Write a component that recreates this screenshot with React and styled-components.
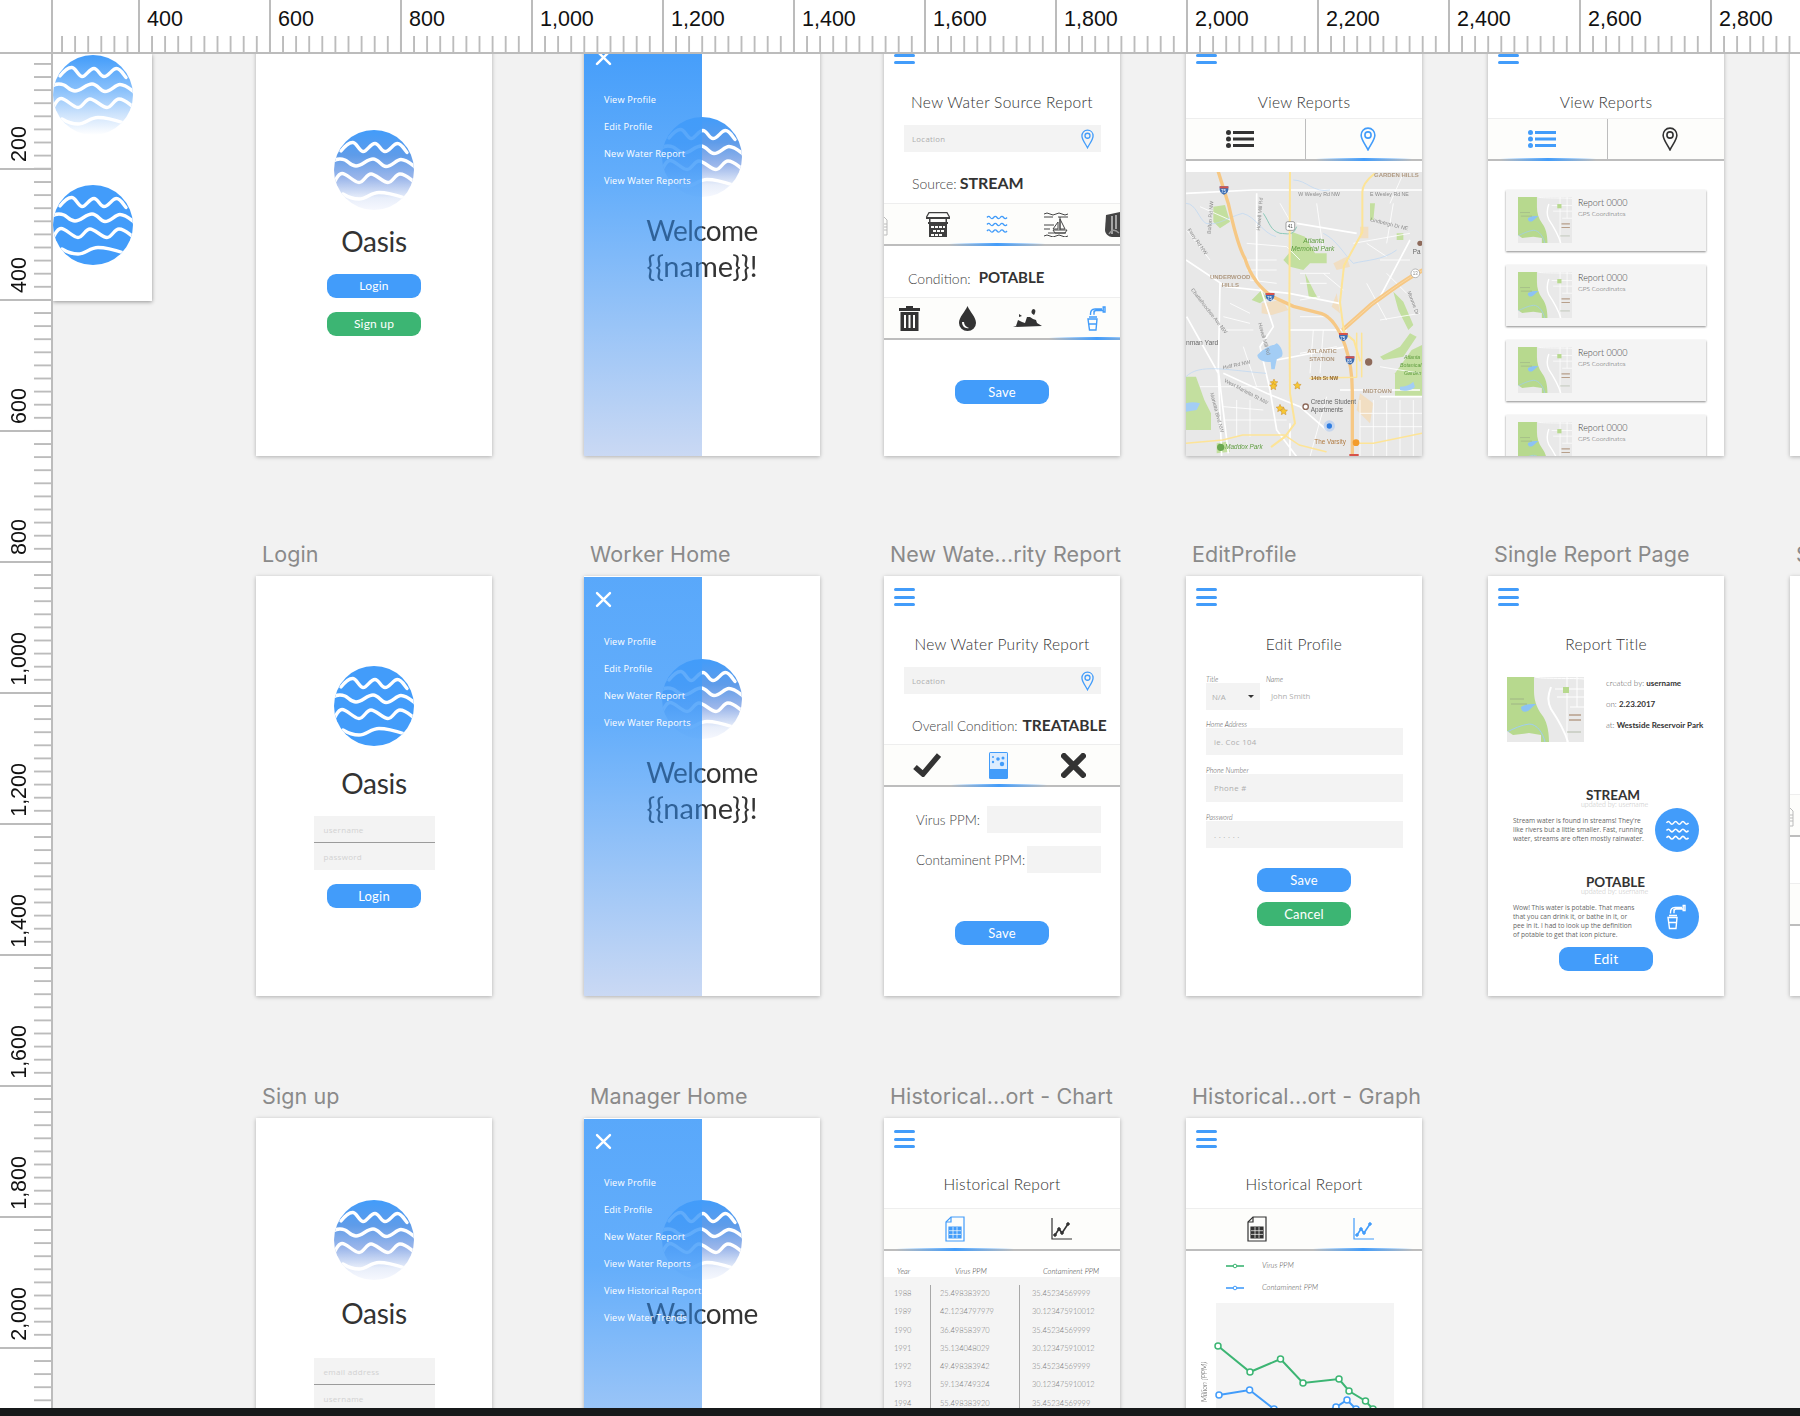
import React from "react";
import styled, { createGlobalStyle } from "styled-components";

const BLUE = "#429cfa";
const GREEN = "#3cb573";
const INK = "#3a3a3a";

const Global = createGlobalStyle`
  html, body { margin: 0; padding: 0; background: #f2f2f2; }
  * { box-sizing: border-box; }
`;

const Page = styled.div`
  width: 1800px;
  height: 1416px;
  display: flex;
  flex-direction: column;
  overflow: hidden;
  background: #f2f2f2;
  font-family: "Lato", "Liberation Sans", sans-serif;
  color: ${INK};
`;

/* ---------- rulers ---------- */

const TopRuler = styled.div`
  flex: none;
  height: 54px;
  display: flex;
  background: #fff;
  border-bottom: 2px solid #bcbcbc;
  position: relative;
  z-index: 3;
`;

const Corner = styled.div`
  flex: none;
  width: 53px;
  border-right: 2px solid #bcbcbc;
`;

const ticksX = `linear-gradient(to right, #bcbcbc 0, #bcbcbc 2px, transparent 2px)`;

const TopCell = styled.div`
  flex: none;
  width: ${p => p.$w}px;
  padding: 6px 0 0 7px;
  font: 21.5px/26px "Liberation Sans", sans-serif;
  color: #111;
  border-left: ${p => (p.$partial ? "none" : "2px solid #bcbcbc")};
  background-image: ${ticksX};
  background-size: 13.1px 16px;
  background-repeat: repeat-x;
  background-position: ${p => (p.$partial ? "8.1px" : "-2px")} bottom;
`;

const Middle = styled.div`
  flex: 1;
  min-height: 0;
  display: flex;
  overflow: hidden;
`;

const LeftRuler = styled.div`
  flex: none;
  width: 53px;
  background: #fff;
  border-right: 2px solid #bcbcbc;
  position: relative;
  z-index: 3;
`;

const ticksY = `linear-gradient(to bottom, #bcbcbc 0, #bcbcbc 2px, transparent 2px)`;

const LeftCell = styled.div`
  height: ${p => p.$h}px;
  display: flex;
  align-items: flex-end;
  padding: 0 0 6px 8px;
  border-bottom: ${p => (p.$last ? "none" : "2px solid #bcbcbc")};
  background-image: ${ticksY};
  background-size: 17px 13.1px;
  background-repeat: repeat-y;
  background-position: right ${p => p.$off}px;
`;

const LeftLabel = styled.span`
  writing-mode: vertical-rl;
  transform: rotate(180deg);
  font: 21.5px/22px "Liberation Sans", sans-serif;
  color: #111;
`;

const Strip = styled.div`
  flex: none;
  height: 8px;
  background: #17191a;
  position: relative;
  z-index: 4;
`;

/* ---------- canvas ---------- */

const Canvas = styled.div`
  flex: 1;
  min-width: 0;
  display: grid;
  grid-template-columns: 203px 328px 300px 302px 302px 302px 236px;
  grid-template-rows: 422px 540px 542px;
  align-items: end;
  margin-top: -20px;
`;

const Blank = styled.span``;

const Cell = styled.div`
  display: flex;
  flex-direction: column;
  width: 236px;
`;

const Label = styled.div`
  margin: 0 0 9px 6px;
  font: 400 21.5px/26px "Inter", "Liberation Sans", sans-serif;
  letter-spacing: 0.1px;
  color: #8a8a8a;
  white-space: nowrap;
`;

const Board = styled.div`
  position: relative;
  width: 236px;
  height: ${p => p.$h || 420}px;
  flex: none;
  display: flex;
  flex-direction: column;
  background: #fff;
  box-shadow: 0 1px 4px rgba(0, 0, 0, 0.28);
  overflow: hidden;
`;

const Assets = styled.div`
  align-self: start;
  width: 99px;
  height: 247px;
  margin-top: 20px;
  padding-top: 1px;
  display: flex;
  flex-direction: column;
  gap: 50px;
  background: #fff;
  box-shadow: 0 1px 4px rgba(0, 0, 0, 0.4);
`;

/* ---------- shared parts ---------- */

const BurgerWrap = styled.div`
  flex: none;
  width: 21px;
  height: 18px;
  margin: 12px 0 0 10px;
  display: flex;
  flex-direction: column;
  justify-content: space-between;
`;

const BurgerBar = styled.span`
  height: 3px;
  border-radius: 2px;
  background: ${BLUE};
`;

const Burger = () => (
  <BurgerWrap>
    <BurgerBar />
    <BurgerBar />
    <BurgerBar />
  </BurgerWrap>
);

const Title = styled.div`
  flex: none;
  margin-top: ${p => p.$mt ?? 28}px;
  height: 20px;
  font: 300 15.5px/20px "Lato", sans-serif;
  text-align: center;
  color: #333;
  letter-spacing: 0.3px;
`;

const LogoSvg = styled.svg`
  display: block;
  flex: none;
  margin: ${p => (p.$mt !== undefined ? `${p.$mt}px auto 0` : "0")};
`;

const stops = {
  fade: [[0, "#429cfa"], [0.32, "#5f9ce9"], [0.6, "#9bb6ea"], [0.85, "#e8eefa"], [1, "#f6f8fe"]],
  pale: [[0, "#429cfa"], [0.45, "#8cc2fb"], [0.75, "#cfe4fc"], [1, "#ffffff"]],
};

const Logo = ({ variant = "solid", mt }) => {
  const id = `logo-${variant}`;
  return (
    <LogoSvg width="80" height="80" viewBox="0 0 80 80" $mt={mt}>
      <defs>
        <clipPath id="logo-clip">
          <circle cx="40" cy="40" r="40" />
        </clipPath>
        {stops[variant] && (
          <linearGradient id={id} x1="0" y1="0" x2="0" y2="1">
            {stops[variant].map(([o, c]) => (
              <stop key={o} offset={o} stopColor={c} />
            ))}
          </linearGradient>
        )}
      </defs>
      <circle cx="40" cy="40" r="40" fill={stops[variant] ? `url(#${id})` : BLUE} />
      <g clipPath="url(#logo-clip)" fill="none" stroke="#fff" strokeWidth="3.4" strokeLinecap="round">
        <path d="M7 21C11 16 15 12 19 12.5C23 13 25 21 29 21.5C33 22 36 13.5 41 13.5C45 13.5 47 21.5 51 21.5C56 21.5 59 13.5 63.5 13.5C67.5 13.5 70 19 73 22.5" />
        <path d="M-1 31C4 28 7 28.5 11 30C15 32 17 36 22 36C28 36 33 29 39 29C45 29 47 36.5 52 36.5C58 36.5 62 29.5 67 29.5C72 29.5 76 33 81 37" />
        <path d="M1 51C3 47 5 43.5 8 43.5C13 43.5 20 52.5 25 52.5C30 52.5 32 44 37 44C42 44 49 52.5 54 52.5C59 52.5 61 44 66 44C71 44 75 48 79 51" />
        <path d="M9 64C14 67 19 69 25 69C32 69 37 62.5 45 62.5C54 62.5 62 65 71 68" />
      </g>
    </LogoSvg>
  );
};

const Oasis = styled.div`
  flex: none;
  margin-top: ${p => p.$mt}px;
  height: 34px;
  font: 400 28px/34px "Lato", sans-serif;
  letter-spacing: -0.3px;
  text-align: center;
  color: #333;
`;

const Button = styled.div`
  flex: none;
  align-self: center;
  width: 94px;
  height: 24px;
  margin-top: ${p => p.$mt}px;
  border-radius: 9px;
  background: ${p => (p.$green ? GREEN : BLUE)};
  color: #fff;
  font: 400 ${p => p.$fs || 13}px/24px "Lato", sans-serif;
  text-align: center;
  letter-spacing: 0.2px;
`;

const Field = styled.div`
  flex: none;
  height: ${p => p.$h || 27}px;
  margin: ${p => p.$mt || 0}px 19px 0 20px;
  padding: 0 7px 0 8px;
  display: flex;
  align-items: center;
  justify-content: space-between;
  background: #f3f3f3;
  font: 400 7.8px/10px "Open Sans", sans-serif;
  letter-spacing: 0.3px;
  color: #aeaeae;
`;

const Stack = styled.div`
  flex: none;
  width: 121px;
  margin: ${p => p.$mt}px auto 0;
  background: #f3f3f3;
`;

const StackRow = styled.div`
  height: 27px;
  padding-left: 10px;
  font: 400 8px/27px "Open Sans", sans-serif;
  letter-spacing: 0.3px;
  color: #d2d2d2;
  border-bottom: ${p => (p.$line ? "1px solid #9b9b9b" : "none")};
`;

const Status = styled.div`
  flex: none;
  height: 20px;
  margin-top: ${p => p.$mt}px;
  padding-left: ${p => p.$pl}px;
  display: flex;
  align-items: ${p => (p.$center ? "center" : "baseline")};
  gap: ${p => p.$gap}px;
  font: 300 ${p => p.$fs || 14}px/20px "Lato", sans-serif;
  color: #444;
  white-space: nowrap;
`;

const Strong = styled.b`
  padding-bottom: ${p => p.$lift || 0}px;
  font: 700 ${p => p.$fs || 15.5}px/20px "Lato", sans-serif;
  color: #333;
`;

const PpmRow = styled.div`
  flex: none;
  height: 27px;
  margin: ${p => p.$mt}px 19px 0 32px;
  display: flex;
  align-items: center;
  gap: ${p => p.$gap}px;
  font: 300 13.4px/20px "Lato", sans-serif;
  color: #444;
  white-space: nowrap;
`;

const PpmInput = styled.div`
  flex: 1;
  height: 27px;
  background: #f3f3f3;
`;

const Tabs = styled.div`
  flex: none;
  height: 43px;
  margin-top: ${p => p.$mt}px;
  display: grid;
  grid-template-columns: ${p => p.$cols};
  background: #fdfdfb;
  border-top: 1px solid #eeeeee;
  border-bottom: 2px solid #bdbdbd;
`;

const Tab = styled.div`
  position: relative;
  display: flex;
  align-items: center;
  justify-content: ${p => (p.$start ? "flex-start" : "center")};
  padding-right: ${p => p.$pr || 0}px;
  padding-left: ${p => p.$pl || 0}px;
  color: ${p => (p.$on ? BLUE : "#333")};
  border-left: ${p => (p.$rule ? "1px solid #bdbdbd" : "none")};
  &::after {
    content: ${p => (p.$on ? '""' : "none")};
    position: absolute;
    left: 50%;
    bottom: -2px;
    width: ${p => p.$glow || 96}px;
    margin-left: -${p => (p.$glow || 96) / 2}px;
    height: 3px;
    background: linear-gradient(to right, rgba(66, 156, 250, 0), ${BLUE} 50%, rgba(66, 156, 250, 0));
  }
`;

/* ---------- icons ---------- */

const Pin = ({ color = BLUE, w = 13, h = 20 }) => (
  <svg width={w} height={h} viewBox="0 0 14 21" fill="none" stroke={color} strokeWidth="1.4">
    <path d="M7 1C3.4 1 1 3.8 1 7.2 1 11 4.8 15.6 7 20c2.2-4.4 6-9 6-12.8C13 3.8 10.6 1 7 1z" />
    <circle cx="7" cy="7" r="2.7" />
  </svg>
);

const Waves = ({ color = "currentColor", w = 22, h = 20, sw = 1.3 }) => (
  <svg width={w} height={h} viewBox="0 0 22 20" fill="none" stroke={color} strokeWidth={sw}>
    <path d="M1 3.5q1.7-2.4 3.3 0t3.3 0 3.4 0 3.3 0 3.3 0 3.4 0" />
    <path d="M1 10.5q1.7-2.4 3.3 0t3.3 0 3.4 0 3.3 0 3.3 0 3.4 0" />
    <path d="M1 17q1.7-2.4 3.3 0t3.3 0 3.4 0 3.3 0 3.3 0 3.4 0" />
  </svg>
);

const Bottle = () => (
  <svg width="7" height="24" viewBox="17 0 7 24" fill="none" stroke="#bbb" strokeWidth="1">
    <path d="M8 1h8v3l4 4v15H4V8l4-4z" />
    <path d="M4 12h16M4 15h16M4 18h16" />
  </svg>
);

const Well = () => (
  <svg width="24" height="25" viewBox="0 0 24 25" fill="#3f3f3f">
    <path d="M3 .6h18l3 5.400H0z" fill="none" stroke="#3f3f3f" strokeWidth="1.2" />
    <path d="M0 5h24v2H0zM3 7h1.500v4H3zM19.500 7H21v4h-1.500zM2 10h20v2H2z" />
    <path d="M3 12h18v13H3z" />
    <path d="M5 14h3v2H5zM9 14h3v2H9zM13 14h3v2h-3zM17 14h2v2h-2zM7 18h3v2H7zM11 18h3v2h-3zM15 18h3v2h-3zM5 22h3v2H5zM9 22h3v2H9zM13 22h3v2h-3z" fill="#fdfdfb" />
  </svg>
);

const Boat = () => (
  <svg width="24" height="25" viewBox="0 0 24 25" fill="none" stroke="#444" strokeWidth="1">
    <path d="M0 2q3-2 6 0t6 0 6 0 6 0M0 5h9M14 5h10M0 13h10M0 17h6M0 24q3-2 6 0t6 0 6 0 6 0M4 21h18" />
    <path d="M16 5v13M16 7l5 10h-5zM14 10l-5 7h5zM9 18h14l-2 3H11z" />
  </svg>
);

const Fall = () => (
  <svg width="24" height="25" viewBox="0 0 24 25" fill="#444">
    <path d="M3 3l14-3h7v25H9C6 25 2 22 2 18z" />
    <path d="M9 4v18M13 3v14" stroke="#ccc" strokeWidth="1.4" fill="none" />
    <path d="M6 22q4-7 10-1" stroke="#999" strokeWidth="1.4" fill="none" />
  </svg>
);

const Trash = () => (
  <svg width="21" height="25" viewBox="0 0 21 25" fill="#333">
    <path d="M7 0h7v2h7v3H0V2h7z" />
    <path d="M1.5 6h18v19h-18zM5 9v13h2V9zM9.5 9v13h2V9zM14 9v13h2V9z" fillRule="evenodd" />
  </svg>
);

const Drop = () => (
  <svg width="17" height="25" viewBox="0 0 17 25" fill="#333">
    <path d="M8.5 0C6 6 0 11 0 17a8.5 8 0 0 0 17 0C17 11 11 6 8.5 0z" />
    <path d="M3 16c0 4 3 7 7 6-3-1-5-3-5-6z" fill="#fdfdfb" />
  </svg>
);

const Mud = () => (
  <svg width="29" height="19" viewBox="0 0 29 19" fill="#333">
    <path d="M0 18l3-1 2-6 4 2 3 1 2-6 3 0 3 2 3 1 1 3 5 3z" />
    <path d="M20 0c3 0 3 3 1 6-2-1-4-3-1-6zM6 5l3 2-3 1z" />
  </svg>
);

const Tap = ({ color = "currentColor", w = 20, h = 25 }) => (
  <svg width={w} height={h} viewBox="0 0 20 25" fill="none" stroke={color} strokeWidth="1.4">
    <path d="M15 3H8C4.5 3 3.5 5 3.5 8v1M7 4.500V8.800M18 1v5h-1.800V1zM16 4.500H9C7.500 4.500 7 5.500 7 7" />
    <path d="M2 11h8M1 13h9l-1 11H2.500zM1.700 18h7.600" />
  </svg>
);

const ListIcon = () => (
  <svg width="28" height="18" viewBox="0 0 28 18" fill="currentColor">
    <circle cx="2.500" cy="2.500" r="2.500" />
    <circle cx="2.500" cy="9" r="2.500" />
    <circle cx="2.500" cy="15.500" r="2.500" />
    <path d="M7 1h21v3H7zM7 7.500h21v3H7zM7 14h21v3H7z" />
  </svg>
);

const Check = () => (
  <svg width="28" height="24" viewBox="0 0 28 24" fill="none" stroke="#333" strokeWidth="5.500">
    <path d="M2 14l8 7L26 2" />
  </svg>
);

const Cross = ({ color = "#333", size = 25, sw = 5.500 }) => (
  <svg width={size} height={size} viewBox="0 0 25 25" fill="none" stroke={color} strokeWidth={sw} strokeLinecap="round">
    <path d="M3 3l19 19M22 3L3 22" />
  </svg>
);

const Glass = () => (
  <svg width="19" height="27" viewBox="0 0 19 27">
    <rect width="19" height="27" rx="1.500" fill={BLUE} />
    <path d="M1 1h17v16H1z" fill="#dcecfe" />
    <circle cx="9" cy="7" r="1.800" fill={BLUE} />
    <circle cx="14" cy="6" r="1.500" fill={BLUE} />
    <circle cx="13" cy="12" r="2.200" fill={BLUE} />
    <circle cx="4" cy="10" r="1.200" fill={BLUE} />
    <circle cx="4" cy="5" r="1" fill={BLUE} />
  </svg>
);

const TableDoc = () => (
  <svg width="20" height="26" viewBox="0 0 20 26" fill="none" stroke="currentColor" strokeWidth="1.200">
    <path d="M6 1h13v24H1V6z" />
    <path d="M6 1v5H1" />
    <path d="M4 11h12v11H4z" fill="currentColor" />
    <path d="M4 14.700h12M4 18.400h12M8 11v11M12 11v11" stroke="#fdfdfb" strokeWidth=".7" />
  </svg>
);

const ChartIcon = () => (
  <svg width="21" height="22" viewBox="0 0 21 22" fill="none" stroke="currentColor">
    <path d="M1 0v21h20" strokeWidth="1.200" />
    <path d="M4 17l4-6 3 4 6-9" strokeWidth="1.600" />
    <circle cx="4" cy="17" r="1.300" fill="currentColor" />
    <circle cx="8" cy="11" r="1.300" fill="currentColor" />
    <circle cx="11" cy="15" r="1.300" fill="currentColor" />
    <circle cx="17" cy="6" r="1.300" fill="currentColor" />
  </svg>
);

/* ---------- maps ---------- */

const MapFrame = styled.svg`
  display: block;
  flex: none;
  filter: blur(0.35px);
  margin-top: ${p => p.$mt || 0}px;
`;

const Mini = ({ w, h }) => (
  <svg width={w} height={h} viewBox="0 0 77 65" preserveAspectRatio="none" style={{ flex: "none" }}>
    <rect width="77" height="65" fill="#e9e9e9" />
    <path d="M0 0h27v14c0 8 2 16 8 24 4 5 7 14 7 27H0z" fill="#b7d98e" />
    <path d="M14 30c4-3 9-3 15-3-3 2-5 5-8 7-4 2-7 0-7-4z" fill="#8cc2f4" />
    <path d="M0 55c6-3 14-7 22-8 8 0 14 9 16 18" fill="none" stroke="#9fcdf2" strokeWidth="1" />
    <path d="M0 54l6 4 16-2 12 2v7H0z" fill="#e9e9e9" />
    <path d="M44 10c-3 8-4 14 0 22 6 9 13 20 17 33" fill="none" stroke="#fff" strokeWidth="2" />
    <path d="M28 0c4 2 40 1 49 2M50 20h27M48 12h29M63 30h14M60 0v65M70 0v30" fill="none" stroke="#fff" strokeWidth="1" />
    <path d="M56 10h6v6h-6z" fill="#b7d98e" />
    <path d="M62 38h12M62 43h12" stroke="#b79f8a" strokeWidth="1.500" />
    <path d="M3 22h14M4 27h16M60 55h14" stroke="#8f9d80" strokeWidth="1" opacity=".6" />
  </svg>
);

const MapText = styled.text`
  font-family: "Liberation Sans", sans-serif;
  font-size: ${p => (p.$fs || 16) * 1.12}px;
  font-weight: ${p => p.$w || 400};
  font-style: ${p => (p.$i ? "italic" : "normal")};
  fill: ${p => p.$c || "#8a8a8a"};
`;

const Shield = ({ x, y, n }) => (
  <g>
    <path d={`M${x - 13} ${y - 13}h26v10c0 8-8 13-13 15-5-2-13-7-13-15z`} fill="#3d6fb5" />
    <rect x={x - 13} y={y - 13} width="26" height="6" fill="#d7534a" />
    <MapText x={x - 9} y={y + 7} $fs={12} $c="#fff">{n}</MapText>
  </g>
);

const Star = ({ x, y }) => (
  <path
    d={`M${x} ${y - 11}l3.500 7.500 8 1-6 5.500 1.500 8-7-4-7 4 1.500-8-6-5.500 8-1z`}
    fill="#f7c832"
    stroke="#c6892b"
    strokeWidth="1.500"
  />
);

const CityMap = () => (
  <MapFrame $mt={11} width="236" height="284" viewBox="18 36 708 852">
    <rect x="18" y="36" width="708" height="852" fill="#e8e8e8" />
    <g fill="#c3df9f">
      <path d="M335 215l40 15 30 50h35v30h-50l-20 20-40-10-20-20 25-30z" />
      <path d="M645 640l50-70 31-15v155h-81z" />
      <path d="M18 650h30l25 70 20 40v50H18z" />
      <path d="M100 140l35-5 15 50-30 20-20-20zM215 420l30-30 15 25-20 15zM375 340l30 60 12 20-30-5zM20 760h20l10 50H20zM640 395l30 30 30 70-15 15-30-60zM570 130h15l-5 50h-10zM650 220h20v20h-20zM600 590l60-30 30-40 20 10-40 60-60 10zM110 850l30-5 10 30-40 5z" />
    </g>
    <g fill="#f2dbb8" opacity=".8">
      <path d="M245 430l60-10 20 30-50 15-30-5zM460 310l40-20 10 30-40 10zM540 200h25v35h-25zM540 700l40 30-10 60-40-40zM470 400l10 60-25-20z" />
    </g>
    <g fill="none" stroke="#fff">
      <g strokeWidth="5">
        <path d="M18 100l200-10h520M18 300l120 80 190 20 150 30M120 370l-5 260 30 250M20 470l95 170 10 250M350 190l180 30M230 100v250l50 150-40 60 30 130 20 120 60 80M130 640l130 60 100 40 80 70M290 600l210-40M330 510h170M600 710h126M330 890V790M480 690h240M690 240l-100 190" />
      </g>
      <g strokeWidth="2.500">
        <path d="M60 140l90 40M20 210l70 90M200 250l120 10 40 40M300 130l40 70M410 130l20 140M430 340l60 50M520 250l170-30M640 130l-20 120M560 370l60 110M190 560l40 120M60 680h210M540 720v170M580 720v170M620 720v170M660 720v170M700 720v170M540 760h186M540 800h186M440 710l-50 180M130 740l120 10M130 780l190 0M170 720v110M210 720v110M400 510l-10 130M430 510l-10 130M470 560l-110 20M600 620l120 20M600 480l120-20M670 40l-40 90M190 300h100M200 330h90M210 360l80 10M360 340h90M360 370h80M360 420l60-10M150 430l60 30M130 470l80 20M130 510h90M360 470h90M560 250l60 40M600 300h90M620 340l60 60" />
      </g>
    </g>
    <g fill="none" stroke="#b9d6f4" strokeWidth="2">
      <path d="M18 130c30 0 40 50 60 60 30 10 70-20 110-30 40 10 60 60 100 70M340 60c40 0 60 40 110 30M430 220c40 20 60 60 90 90 40-10 90-10 130-40M18 650c40-40 120-20 240-10" />
    </g>
    <path d="M250 160c20 30 20 50 50 60 20 0 40 10 50 -20" fill="none" stroke="#8cc9b9" strokeWidth="3" />
    <g fill="#a3cdf5">
      <path d="M232 585c20-20 40-30 50-30l8-5c14 8 22 30 15 40l-15 8-6 30h-10l-2-22c-20 0-40-5-40-21z" />
      <path d="M18 730c15-5 30-3 42 0l-10 20-32 5z" />
      <path d="M660 680c15 0 30-5 40-15l5 15c-5 10-30 15-45 10z" />
    </g>
    <g fill="none" strokeLinecap="round">
      <path d="M115 36l30 95c12 50 25 120 50 165 16 50 45 90 85 115l60 28 85 22c30 10 55 50 70 95 14 40 22 80 22 140v192" stroke="#f6c885" strokeWidth="10" />
      <path d="M726 332c-50 25-100 65-150 100l-85 75" stroke="#f6c885" strokeWidth="13" />
      <path d="M726 332c-50 25-100 65-150 100l-85 75" stroke="#fbe0b5" strokeWidth="2" />
      <path d="M330 36l-2 414 2 250 15 90-30 40-40 30" stroke="#fde497" strokeWidth="6" />
      <path d="M582 42c-25 20-35 40-35 55v120l-55 100-12 110 12 90 30 25 18 60" stroke="#fde497" strokeWidth="6" />
      <path d="M18 850l110-10 60-15h125l45 30 80 20M520 850h60l146-30M390 655l140-3M530 520v130M545 520v130" stroke="#fde497" strokeWidth="4.500" />
    </g>
    <Shield x={132} y={92} n="75" />
    <Shield x={270} y={412} n="75" />
    <Shield x={490} y={532} n="75" />
    <Shield x={510} y={602} n="85" />
    <rect x="318" y="185" width="26" height="26" rx="5" fill="#fff" stroke="#777" strokeWidth="2" />
    <MapText x={323} y={203} $fs={12} $c="#444">41</MapText>
    <circle cx="706" cy="340" r="13" fill="#fff" stroke="#999" strokeWidth="2" />
    <MapText x={698} y={345} $fs={12}>13</MapText>
    <MapText x={582} y={50} $fs={16} $c="#b09a82" $w={700}>GARDEN HILLS</MapText>
    <MapText x={355} y={108} $fs={14}>W Wesley Rd NW</MapText>
    <MapText x={570} y={108} $fs={14}>E Wesley Rd NE</MapText>
    <MapText x={570} y={183} $fs={14} transform="rotate(14 570 183)">Lindbergh Dr NE</MapText>
    <MapText x={370} y={248} $fs={18} $c="#5e9c3e" $i>Atlanta</MapText>
    <MapText x={333} y={273} $fs={18} $c="#5e9c3e" $i>Memorial Park</MapText>
    <MapText x={90} y={356} $fs={16} $c="#b09a82" $w={700}>UNDERWOOD</MapText>
    <MapText x={125} y={380} $fs={16} $c="#b09a82" $w={700}>HILLS</MapText>
    <MapText x={92} y={222} $fs={14} transform="rotate(-85 92 222)">Bolton Rd NW</MapText>
    <MapText x={240} y={212} $fs={14} transform="rotate(-85 240 212)">Howell Mill Rd</MapText>
    <MapText x={22} y={210} $fs={14} transform="rotate(55 22 210)">Ferry Rd NW</MapText>
    <MapText x={32} y={390} $fs={14} transform="rotate(52 32 390)">Chattahoochee Ave NW</MapText>
    <MapText x={235} y={490} $fs={14} transform="rotate(75 235 490)">Howell Mill Rd</MapText>
    <MapText x={18} y={556} $fs={18} $c="#6a6a6a">nman Yard</MapText>
    <MapText x={382} y={578} $fs={16} $c="#b09a82" $w={700}>ATLANTIC</MapText>
    <MapText x={388} y={602} $fs={16} $c="#b09a82" $w={700}>STATION</MapText>
    <MapText x={130} y={628} $fs={14} transform="rotate(-12 130 628)">Huff Rd NW</MapText>
    <MapText x={132} y={665} $fs={14} transform="rotate(28 132 665)">West Marietta St NW</MapText>
    <MapText x={90} y={700} $fs={14} transform="rotate(75 90 700)">Marietta Blvd NW</MapText>
    <MapText x={392} y={661} $fs={14} $c="#94682e" $w={700}>14th St NW</MapText>
    <MapText x={548} y={699} $fs={16} $c="#b09a82" $w={700}>MIDTOWN</MapText>
    <MapText x={392} y={732} $fs={17} $c="#666">Crecine Student</MapText>
    <MapText x={392} y={757} $fs={17} $c="#666">Apartments</MapText>
    <circle cx="377" cy="740" r="8" fill="#fff" stroke="#8e6a5a" strokeWidth="4" />
    <circle cx="566" cy="606" r="11" fill="#8e6a5a" />
    <MapText x={403} y={853} $fs={17} $c="#b07a40">The Varsity</MapText>
    <circle cx="528" cy="848" r="10" fill="#f39c2c" />
    <circle cx="122" cy="862" r="11" fill="#6aa84f" />
    <MapText x={136} y={868} $fs={17} $c="#5e9c3e" $i>Maddox Park</MapText>
    <MapText x={672} y={598} $fs={14} $c="#5e9c3e" $i>Atlanta</MapText>
    <MapText x={660} y={622} $fs={14} $c="#5e9c3e" $i>Botanical</MapText>
    <MapText x={672} y={646} $fs={14} $c="#5e9c3e" $i>Garden</MapText>
    <MapText x={698} y={282} $fs={17} $c="#666">Pa</MapText>
    <circle cx="720" cy="250" r="8" fill="#8e6a5a" />
    <MapText x={682} y={395} $fs={14} transform="rotate(70 682 395)">Monroe Dr</MapText>
    <Star x={282} y={668} />
    <Star x={280} y={678} />
    <Star x={352} y={676} />
    <Star x={300} y={744} />
    <Star x={311} y={753} />
    <circle cx="448" cy="798" r="17" fill="#b7cdef" opacity=".7" />
    <circle cx="448" cy="798" r="8" fill="#2f7de1" />
    <rect x="508" y="882" width="28" height="6" fill="#d7534a" />
  </MapFrame>
);

/* ---------- sections ---------- */

const SourceBar = ({ mt }) => (
  <Tabs $mt={mt} $cols="25px 58px 59px 59px 59px">
    <Tab $start><Bottle /></Tab>
    <Tab><Well /></Tab>
    <Tab $on><Waves color={BLUE} /></Tab>
    <Tab><Boat /></Tab>
    <Tab><Fall /></Tab>
  </Tabs>
);

const ConditionBar = ({ mt }) => (
  <Tabs $mt={mt} $cols="51px 65px 54px 86px">
    <Tab><Trash /></Tab>
    <Tab><Drop /></Tab>
    <Tab><Mud /></Tab>
    <Tab $on><Tap /></Tab>
  </Tabs>
);

const ViewTabs = ({ active, mt = 6 }) => (
  <Tabs $mt={mt} $cols="119px 117px">
    <Tab $pr={12} $on={active === "list"}><ListIcon /></Tab>
    <Tab $rule $pl={7} $on={active === "map"}>
      <Pin color={active === "map" ? BLUE : "#333"} w={16} h={24} />
    </Tab>
  </Tabs>
);

const HistoryTabs = ({ active }) => (
  <Tabs $mt={14} $cols="141px 72px">
    <Tab $on={active === "chart"} $glow={118}><TableDoc /></Tab>
    <Tab $on={active === "graph"} $glow={100}><ChartIcon /></Tab>
  </Tabs>
);

const Panel = styled.div`
  position: absolute;
  left: 0;
  top: 1px;
  bottom: 0;
  width: 118px;
  background: linear-gradient(
    to bottom,
    ${p => (p.$strong ? "rgba(66, 156, 250, 1)" : "rgba(66, 156, 250, 0.88)")},
    rgba(66, 156, 250, 0.82) 35%,
    rgba(190, 208, 241, 0.82)
  );
`;

const Menu = styled.div`
  position: absolute;
  left: 0;
  top: 1px;
  z-index: 2;
  padding: 14px 0 0 11px;
`;

const MenuList = styled.div`
  margin: ${p => p.$mt}px 0 0 9px;
`;

const MenuItem = styled.div`
  height: 27px;
  font: 400 9.2px/27px "Open Sans", sans-serif;
  letter-spacing: 0.15px;
  color: #fff;
  white-space: nowrap;
`;

const Welcome = styled.div`
  position: relative;
  z-index: 1;
  flex: none;
  height: 35px;
  margin-top: ${p => p.$mt || 0}px;
  font: 400 ${p => p.$fs}px/35px "Lato", sans-serif;
  letter-spacing: ${p => p.$ls || 0}px;
  text-align: center;
  color: transparent;
  background: linear-gradient(to right, #2f6299 50%, #333 50%);
  -webkit-background-clip: text;
  background-clip: text;
`;

const worker = ["View Profile", "Edit Profile", "New Water Report", "View Water Reports"];
const manager = [...worker, "View Historical Report", "View Water Trends"];

const Home = ({ items, h, strong, name = true, top = 83, menuGap = 17 }) => (
  <Board $h={h}>
    <Logo variant="fade" mt={top} />
    <Panel $strong={strong} />
    <Welcome $mt={16} $fs={28} $ls={-0.6}>Welcome</Welcome>
    {name && <Welcome $fs={29}>{"{{name}}!"}</Welcome>}
    <Menu>
      <Cross color="#fff" size={17} sw={3.600} />
      <MenuList $mt={menuGap}>
        {items.map(m => (
          <MenuItem key={m}>{m}</MenuItem>
        ))}
      </MenuList>
    </Menu>
  </Board>
);

const ReportList = styled.div`
  margin: 29px 0 0 18px;
  display: flex;
  flex-direction: column;
  gap: 14px;
`;

const Card = styled.div`
  flex: none;
  width: 200px;
  height: 61px;
  padding: 7px 0 0 12px;
  display: flex;
  gap: 6px;
  background: #f4f4f4;
  box-shadow: 0 1px 2px rgba(0, 0, 0, 0.45);
`;

const CardTitle = styled.div`
  font: 300 9px/12px "Lato", sans-serif;
  color: #444;
`;

const CardSub = styled.div`
  font: 300 6.500px/9px "Lato", sans-serif;
  color: #555;
`;

const FormRow = styled.div`
  flex: none;
  margin: 21px 0 0 20px;
  display: flex;
`;

const FormCol = styled.div`
  flex: none;
  width: ${p => p.$w}px;
`;

const Caption = styled.div`
  flex: none;
  height: 8px;
  margin: ${p => p.$mt || 0}px 0 0 ${p => p.$ml || 0}px;
  font: italic 300 7px/8px "Lato", sans-serif;
  color: #555;
`;

const Select = styled.div`
  height: 27px;
  width: 54px;
  padding: 0 6px;
  display: flex;
  align-items: center;
  justify-content: space-between;
  background: #f3f3f3;
  font: 400 7.800px/10px "Open Sans", sans-serif;
  color: #aeaeae;
`;

const Caret = styled.span`
  width: 0;
  height: 0;
  border: 3px solid transparent;
  border-top: 3.500px solid #333;
  border-bottom: 0;
`;

const Plain = styled.div`
  height: 27px;
  padding-left: 5px;
  font: 400 7.800px/27px "Open Sans", sans-serif;
  color: #aeaeae;
`;

const MetaRow = styled.div`
  flex: none;
  margin: 23px 0 0 19px;
  display: flex;
  gap: 22px;
`;

const Meta = styled.div`
  margin-top: -4px;
  font: 300 8px/21px "Lato", sans-serif;
  color: #555;
  white-space: nowrap;
  b {
    font-weight: 700;
    color: #333;
  }
`;

const SectionHead = styled.div`
  flex: none;
  height: 14px;
  margin: ${p => p.$mt}px 0 0 98px;
  font: 700 13.500px/14px "Lato", sans-serif;
  color: #333;
`;

const SectionBy = styled.div`
  flex: none;
  height: 8px;
  margin: -2px 0 0 93px;
  font: 300 7px/8px "Lato", sans-serif;
  color: #bdbdbd;
`;

const SectionBody = styled.div`
  flex: none;
  height: 44px;
  margin-top: ${p => p.$mt || 0}px;
  padding-left: 25px;
  display: flex;
  align-items: flex-start;
`;

const SectionText = styled.div`
  flex: none;
  width: 142px;
  padding-top: ${p => p.$pt}px;
  font: 400 6.600px/9.100px "Open Sans", sans-serif;
  color: #666;
  white-space: nowrap;
`;

const Disc = styled.div`
  flex: none;
  width: 44px;
  height: 44px;
  display: flex;
  align-items: center;
  justify-content: center;
  border-radius: 50%;
  background: ${BLUE};
`;

const Columns = styled.div`
  flex: none;
  height: 10px;
  margin-top: 16px;
  display: grid;
  grid-template-columns: 58px 88px 1fr;
  padding-left: 13px;
  font: italic 300 7.500px/10px "Lato", sans-serif;
  color: #444;
`;

const TableBody = styled.div`
  flex: 1;
  padding-top: 8px;
  background: #f4f4f4;
`;

const TableRow = styled.div`
  height: 18.300px;
  display: grid;
  grid-template-columns: 46px 89px 1fr;
  font: 300 7.500px/18.300px "Lato", sans-serif;
  color: #7c7c7c;
`;

const TableCell = styled.div`
  padding-left: ${p => p.$pl}px;
  border-left: ${p => (p.$rule ? "1px solid #a8a8a8" : "none")};
`;

const LegendRow = styled.div`
  flex: none;
  height: 22px;
  margin-top: ${p => p.$mt || 0}px;
  padding-left: 40px;
  display: flex;
  align-items: center;
  gap: 18px;
  font: italic 300 7.500px/10px "Lato", sans-serif;
  color: #555;
`;

const GraphRow = styled.div`
  flex: 1;
  min-height: 0;
  margin-top: 4px;
  padding-left: 10px;
  display: flex;
  align-items: stretch;
  gap: 2px;
`;

const AxisLabel = styled.div`
  flex: none;
  align-self: flex-start;
  width: 18px;
  margin-top: 59px;
  writing-mode: vertical-rl;
  transform: rotate(180deg);
  font: italic 300 7.500px/18px "Lato", sans-serif;
  color: #555;
  white-space: nowrap;
`;

const Plot = styled.div`
  flex: none;
  width: 178px;
  background: #f4f4f4;
`;

const rows = [
  ["1988", "25.498383920", "35.45234569999"],
  ["1989", "42.1234797979", "30.123475910012"],
  ["1990", "36.498583970", "35.45234569999"],
  ["1991", "35.134048029", "30.123475910012"],
  ["1992", "49.498383942", "35.45234569999"],
  ["1993", "59.134749324", "30.123475910012"],
  ["1994", "55.498383920", "35.45234569999"],
];

const Legend = ({ color }) => (
  <svg width="18" height="6" viewBox="0 0 18 6">
    <path d="M0 3h18" stroke={color} strokeWidth="1.600" />
    <circle cx="9" cy="3" r="1.800" fill="#fff" stroke={color} />
  </svg>
);

const Series = ({ pts, color }) => (
  <g>
    <polyline points={pts.map(p => p.join(",")).join(" ")} fill="none" stroke={color} strokeWidth="2" />
    {pts.map(([x, y]) => (
      <circle key={`${x}-${y}`} cx={x} cy={y} r="3" fill="#fff" stroke={color} strokeWidth="1.500" />
    ))}
  </g>
);

const green = [[2, 43], [34, 69], [64.500, 56], [87, 80], [123, 76], [133, 88], [149.500, 98], [157, 106]];
const blue = [[3, 92], [33.600, 87], [58, 106], [90, 118], [120, 104], [131, 97], [140, 106]];

const Graph = () => (
  <svg width="178" height="234" viewBox="0 0 178 234" style={{ display: "block", overflow: "visible" }}>
    <Series pts={green} color={GREEN} />
    <Series pts={blue} color={BLUE} />
  </svg>
);

const topLabels = ["400", "600", "800", "1,000", "1,200", "1,400", "1,600", "1,800", "2,000", "2,200", "2,400", "2,600", "2,800"];
const leftLabels = ["200", "400", "600", "800", "1,000", "1,200", "1,400", "1,600", "1,800", "2,000"];

const App = () => (
  <Page>
    <Global />
    <TopRuler>
      <Corner />
      <TopCell $w={85} $partial />
      {topLabels.map(l => (
        <TopCell key={l} $w={131}>{l}</TopCell>
      ))}
    </TopRuler>
    <Middle>
      <LeftRuler>
        {leftLabels.map((l, i) => (
          <LeftCell key={l} $h={i === 0 ? 116 : 131} $off={i === 0 ? 9 : -2}>
            <LeftLabel>{l}</LeftLabel>
          </LeftCell>
        ))}
        <LeftCell $h={60} $off={-2} $last />
      </LeftRuler>
      <Canvas>
        <Assets>
          <Logo variant="pale" />
          <Logo />
        </Assets>

        {/* row 1 */}
        <Cell>
          <Board $h={422}>
            <Logo variant="fade" mt={96} />
            <Oasis $mt={14}>Oasis</Oasis>
            <Button $mt={16} $fs={12}>Login</Button>
            <Button $mt={14} $green $fs={12}>Sign up</Button>
          </Board>
        </Cell>
        <Cell>
          <Home items={worker} h={422} strong />
        </Cell>
        <Cell>
          <Board $h={422}>
            <Burger />
            <Title>New Water Source Report</Title>
            <Field $mt={13}>Location<Pin /></Field>
            <Status $mt={21} $pl={28} $gap={3}>
              Source: <Strong $fs={16}>STREAM</Strong>
            </Status>
            <SourceBar mt={10} />
            <Status $mt={23} $pl={24} $gap={8} $center>
              Condition: <Strong $fs={15} $lift={4}>POTABLE</Strong>
            </Status>
            <ConditionBar mt={8} />
            <Button $mt={40}>Save</Button>
          </Board>
        </Cell>
        <Cell>
          <Board $h={422}>
            <Burger />
            <Title>View Reports</Title>
            <ViewTabs active="map" />
            <CityMap />
          </Board>
        </Cell>
        <Cell>
          <Board $h={422}>
            <Burger />
            <Title>View Reports</Title>
            <ViewTabs active="list" />
            <ReportList>
              {[0, 1, 2, 3].map(i => (
                <Card key={i}>
                  <Mini w={54} h={46} />
                  <div>
                    <CardTitle>Report 0000</CardTitle>
                    <CardSub>GPS Coordinates</CardSub>
                  </div>
                </Card>
              ))}
            </ReportList>
          </Board>
        </Cell>
        <Cell>
          <Board $h={422}>
            <Burger />
          </Board>
        </Cell>

        {/* row 2 */}
        <Blank />
        <Cell>
          <Label>Login</Label>
          <Board>
            <Logo mt={90} />
            <Oasis $mt={20}>Oasis</Oasis>
            <Stack $mt={16}>
              <StackRow $line>username</StackRow>
              <StackRow>password</StackRow>
            </Stack>
            <Button $mt={14}>Login</Button>
          </Board>
        </Cell>
        <Cell>
          <Label>Worker Home</Label>
          <Home items={worker} />
        </Cell>
        <Cell>
          <Label>New Wate...rity Report</Label>
          <Board>
            <Burger />
            <Title>New Water Purity Report</Title>
            <Field $mt={13}>Location<Pin /></Field>
            <Status $mt={21} $pl={28} $gap={5} $fs={13.500}>
              Overall Condition: <Strong>TREATABLE</Strong>
            </Status>
            <Tabs $mt={9} $cols="86px 57px 93px">
              <Tab><Check /></Tab>
              <Tab $on><Glass /></Tab>
              <Tab><Cross sw={6} /></Tab>
            </Tabs>
            <PpmRow $mt={19} $gap={7}>Virus PPM:<PpmInput /></PpmRow>
            <PpmRow $mt={13} $gap={2}>Contaminent PPM:<PpmInput /></PpmRow>
            <Button $mt={48}>Save</Button>
          </Board>
        </Cell>
        <Cell>
          <Label>EditProfile</Label>
          <Board>
            <Burger />
            <Title>Edit Profile</Title>
            <FormRow>
              <FormCol $w={60}>
                <Caption>Title</Caption>
                <Select>N/A<Caret /></Select>
              </FormCol>
              <FormCol $w={100}>
                <Caption>Name</Caption>
                <Plain>John Smith</Plain>
              </FormCol>
            </FormRow>
            <Caption $mt={10} $ml={20}>Home Address</Caption>
            <Field>ie. Coc 104</Field>
            <Caption $mt={11} $ml={20}>Phone Number</Caption>
            <Field $h={28}>Phone #</Field>
            <Caption $mt={11} $ml={20}>Password</Caption>
            <Field>. . . . . .</Field>
            <Button $mt={20}>Save</Button>
            <Button $mt={10} $green>Cancel</Button>
          </Board>
        </Cell>
        <Cell>
          <Label>Single Report Page</Label>
          <Board>
            <Burger />
            <Title>Report Title</Title>
            <MetaRow>
              <Mini w={77} h={65} />
              <Meta>
                created by: <b>username</b><br />
                on: <b>2.23.2017</b><br />
                at: <b>Westside Reservoir Park</b>
              </Meta>
            </MetaRow>
            <SectionHead $mt={46}>STREAM</SectionHead>
            <SectionBy>updated by: username</SectionBy>
            <SectionBody>
              <SectionText $pt={8}>
                Stream water is found in streams! They're<br />
                like rivers but a little smaller. Fast, running<br />
                water, streams are often mostly rainwater.
              </SectionText>
              <Disc><Waves color="#fff" w={25} h={22} sw={1.400} /></Disc>
            </SectionBody>
            <SectionHead $mt={23}>POTABLE</SectionHead>
            <SectionBy>updated by: username</SectionBy>
            <SectionBody>
              <SectionText $pt={8}>
                Wow! This water is potable. That means<br />
                that you can drink it, or bathe in it, or<br />
                pee in it. I had to look up the definition<br />
                of potable to get that icon picture.
              </SectionText>
              <Disc><Tap color="#fff" w={20} h={26} /></Disc>
            </SectionBody>
            <Button $mt={8} $fs={14}>Edit</Button>
          </Board>
        </Cell>
        <Cell>
          <Label>S</Label>
          <Board>
            <Burger />
            <SourceBar mt={188} />
            <ConditionBar mt={46} />
          </Board>
        </Cell>

        {/* row 3 */}
        <Blank />
        <Cell>
          <Label>Sign up</Label>
          <Board>
            <Logo variant="fade" mt={82} />
            <Oasis $mt={16}>Oasis</Oasis>
            <Stack $mt={28}>
              <StackRow $line>email address</StackRow>
              <StackRow>username</StackRow>
            </Stack>
          </Board>
        </Cell>
        <Cell>
          <Label>Manager Home</Label>
          <Home items={manager} name={false} top={82} menuGap={16} />
        </Cell>
        <Cell>
          <Label>Historical...ort - Chart</Label>
          <Board>
            <Burger />
            <Title $mt={26}>Historical Report</Title>
            <HistoryTabs active="chart" />
            <Columns>
              <span>Year</span>
              <span>Virus PPM</span>
              <span>Contaminent PPM</span>
            </Columns>
            <TableBody>
              {rows.map(r => (
                <TableRow key={r[0]}>
                  <TableCell $pl={10}>{r[0]}</TableCell>
                  <TableCell $pl={9} $rule>{r[1]}</TableCell>
                  <TableCell $pl={12} $rule>{r[2]}</TableCell>
                </TableRow>
              ))}
            </TableBody>
          </Board>
        </Cell>
        <Cell>
          <Label>Historical...ort - Graph</Label>
          <Board>
            <Burger />
            <Title $mt={26}>Historical Report</Title>
            <HistoryTabs active="graph" />
            <LegendRow $mt={4}><Legend color={GREEN} />Virus PPM</LegendRow>
            <LegendRow><Legend color={BLUE} />Contaminent PPM</LegendRow>
            <GraphRow>
              <AxisLabel>Million (PPM)</AxisLabel>
              <Plot><Graph /></Plot>
            </GraphRow>
          </Board>
        </Cell>
      </Canvas>
    </Middle>
    <Strip />
  </Page>
);

export default App;
